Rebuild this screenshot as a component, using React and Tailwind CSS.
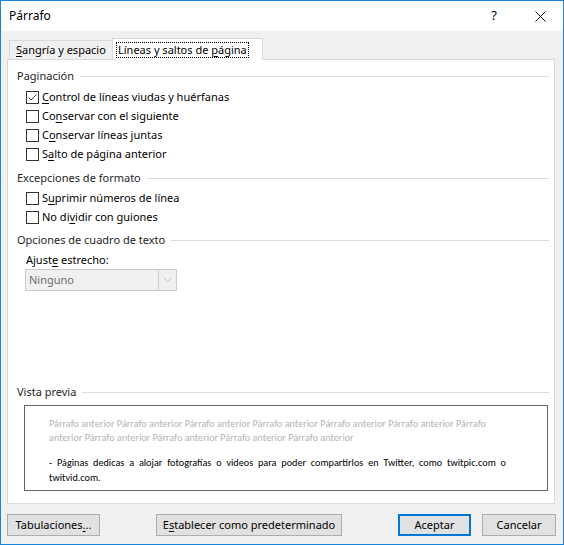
import React from 'react';

const ui = { fontFamily: '"Segoe UI", "Noto Sans", sans-serif' };
const preview = { fontFamily: 'Calibri, Lato, sans-serif' };

const U = ({ children }) => <span className="underline underline-offset-2">{children}</span>;

const Header = ({ children }) => (
    <div className="flex items-center h-[16px] leading-[16px]">
        <span className="text-[#1e1e1e] whitespace-nowrap">{children}</span>
        <div className="flex-1 h-px bg-[#dcdcdc] ml-[6px]"></div>
    </div>
);

const CheckBox = ({ checked }) => (
    <div className="w-[13px] h-[13px] border border-[#333333] bg-white flex items-center justify-center shrink-0">
        {checked && (
            <svg width="11" height="11" viewBox="0 0 11 11">
                <path d="M1.5 5.5 L4 8 L9.5 2.5" fill="none" stroke="#444" strokeWidth="1" />
            </svg>
        )}
    </div>
);

const CheckRow = ({ checked, children }) => (
    <div className="flex items-center h-[19px] pl-[9px]">
        <CheckBox checked={checked} />
        <span className="ml-[3px] text-black whitespace-nowrap">{children}</span>
    </div>
);

const Button = ({ className = '', children }) => (
    <div className={`h-[22px] flex items-center justify-center bg-[#e1e1e1] text-black ${className}`}>
        <span className="whitespace-nowrap">{children}</span>
    </div>
);

export default function App() {
    return (
        <div className="w-[564px] h-[545px] border border-[#1883d7] bg-[#f0f0f0] flex flex-col text-[11px]" style={ui}>
            {/* Title bar */}
            <div className="h-[30px] bg-white flex items-center shrink-0">
                <span className="pl-[8px] text-black text-[12px]">Párrafo</span>
                <span className="ml-auto text-black text-[13px]">?</span>
                <svg className="ml-[38px] mr-[17px]" width="11" height="11" viewBox="0 0 11 11">
                    <path d="M0.5 0.5 L10.5 10.5 M10.5 0.5 L0.5 10.5" stroke="#111" strokeWidth="1" />
                </svg>
            </div>

            {/* Tabs */}
            <div className="flex items-end pl-[8px] pt-[7px] shrink-0">
                <div className="w-[103px] h-[19px] border-t border-l border-[#d9d9d9] flex items-center pl-[6px] text-black whitespace-nowrap">
                    <span><U>S</U>angría y espacio</span>
                </div>
                <div className="relative z-10 -mb-px w-[151px] h-[22px] border-t border-l border-r border-[#d9d9d9] bg-white flex items-start pt-[3px] pl-[3px]">
                    <span className="border border-dotted border-black px-[1px] leading-[14px] text-black whitespace-nowrap">
                        Líneas y saltos de <U>p</U>ágina
                    </span>
                </div>
            </div>

            {/* Panel */}
            <div className="ml-[6px] w-[548px] h-[445px] border border-[#d9d9d9] bg-white flex flex-col pl-[9px] pr-[5px] pt-[8px] pb-[12px] shrink-0">
                <Header>Paginación</Header>
                <div className="mt-[4px]">
                    <CheckRow checked><U>C</U>ontrol de líneas viudas y huérfanas</CheckRow>
                    <CheckRow>Co<U>n</U>servar con el siguiente</CheckRow>
                    <CheckRow>C<U>o</U>nservar líneas juntas</CheckRow>
                    <CheckRow>S<U>a</U>lto de página anterior</CheckRow>
                </div>

                <div className="mt-[6px]">
                    <Header>Excepciones de formato</Header>
                </div>
                <div className="mt-[3px]">
                    <CheckRow>S<U>u</U>primir números de línea</CheckRow>
                    <CheckRow>No di<U>v</U>idir con guiones</CheckRow>
                </div>

                <div className="mt-[5px]">
                    <Header>Opciones de cuadro de texto</Header>
                </div>
                <div className="mt-[4px] pl-[9px] h-[16px] leading-[16px] text-black">
                    Ajust<U>e</U> estrecho:
                </div>
                <div className="mt-[1px] ml-[8px] w-[152px] h-[22px] border border-[#cccccc] bg-[#f0f0f0] flex">
                    <span className="flex-1 pl-[3px] text-[#6d6d6d] leading-[20px]">Ninguno</span>
                    <div className="w-[18px] border-l border-[#cccccc] flex items-center justify-center">
                        <svg width="9" height="6" viewBox="0 0 9 6">
                            <path d="M0.5 0.5 L4.5 4.5 L8.5 0.5" fill="none" stroke="#bfbfbf" strokeWidth="1" />
                        </svg>
                    </div>
                </div>

                {/* Preview */}
                <div className="mt-auto">
                    <Header>Vista previa</Header>
                    <div className="mt-[5px] ml-[7px] w-[524px] h-[86px] border border-[#646464] bg-white pl-[24px] pt-[11px]" style={preview}>
                        <div className="w-[457px] text-[10.2px] leading-[14px] text-[#b4b4b4] whitespace-nowrap">
                            <div>Párrafo anterior Párrafo anterior Párrafo anterior Párrafo anterior Párrafo anterior Párrafo anterior Párrafo</div>
                            <div>anterior Párrafo anterior Párrafo anterior Párrafo anterior Párrafo anterior</div>
                        </div>
                        <div className="mt-[10px] w-[457px] text-[10.2px] leading-[15px] text-black">
                            <div className="text-justify [text-align-last:justify] whitespace-nowrap">
                                - Páginas dedicas a alojar fotografías o videos para poder compartirlos en Twitter, como twitpic.com o
                            </div>
                            <div>twitvid.com.</div>
                        </div>
                    </div>
                </div>
            </div>

            {/* Buttons */}
            <div className="mt-[10px] flex shrink-0">
                <Button className="ml-[6px] w-[93px] border border-[#adadad]">Tabulaciones<U>.</U>..</Button>
                <Button className="ml-[56px] w-[186px] border border-[#adadad]">E<U>s</U>tablecer como predeterminado</Button>
                <Button className="ml-[56px] w-[73px] border-2 border-[#0078d7]">Aceptar</Button>
                <Button className="ml-[11px] w-[74px] border border-[#adadad]">Cancelar</Button>
            </div>
        </div>
    );
}
